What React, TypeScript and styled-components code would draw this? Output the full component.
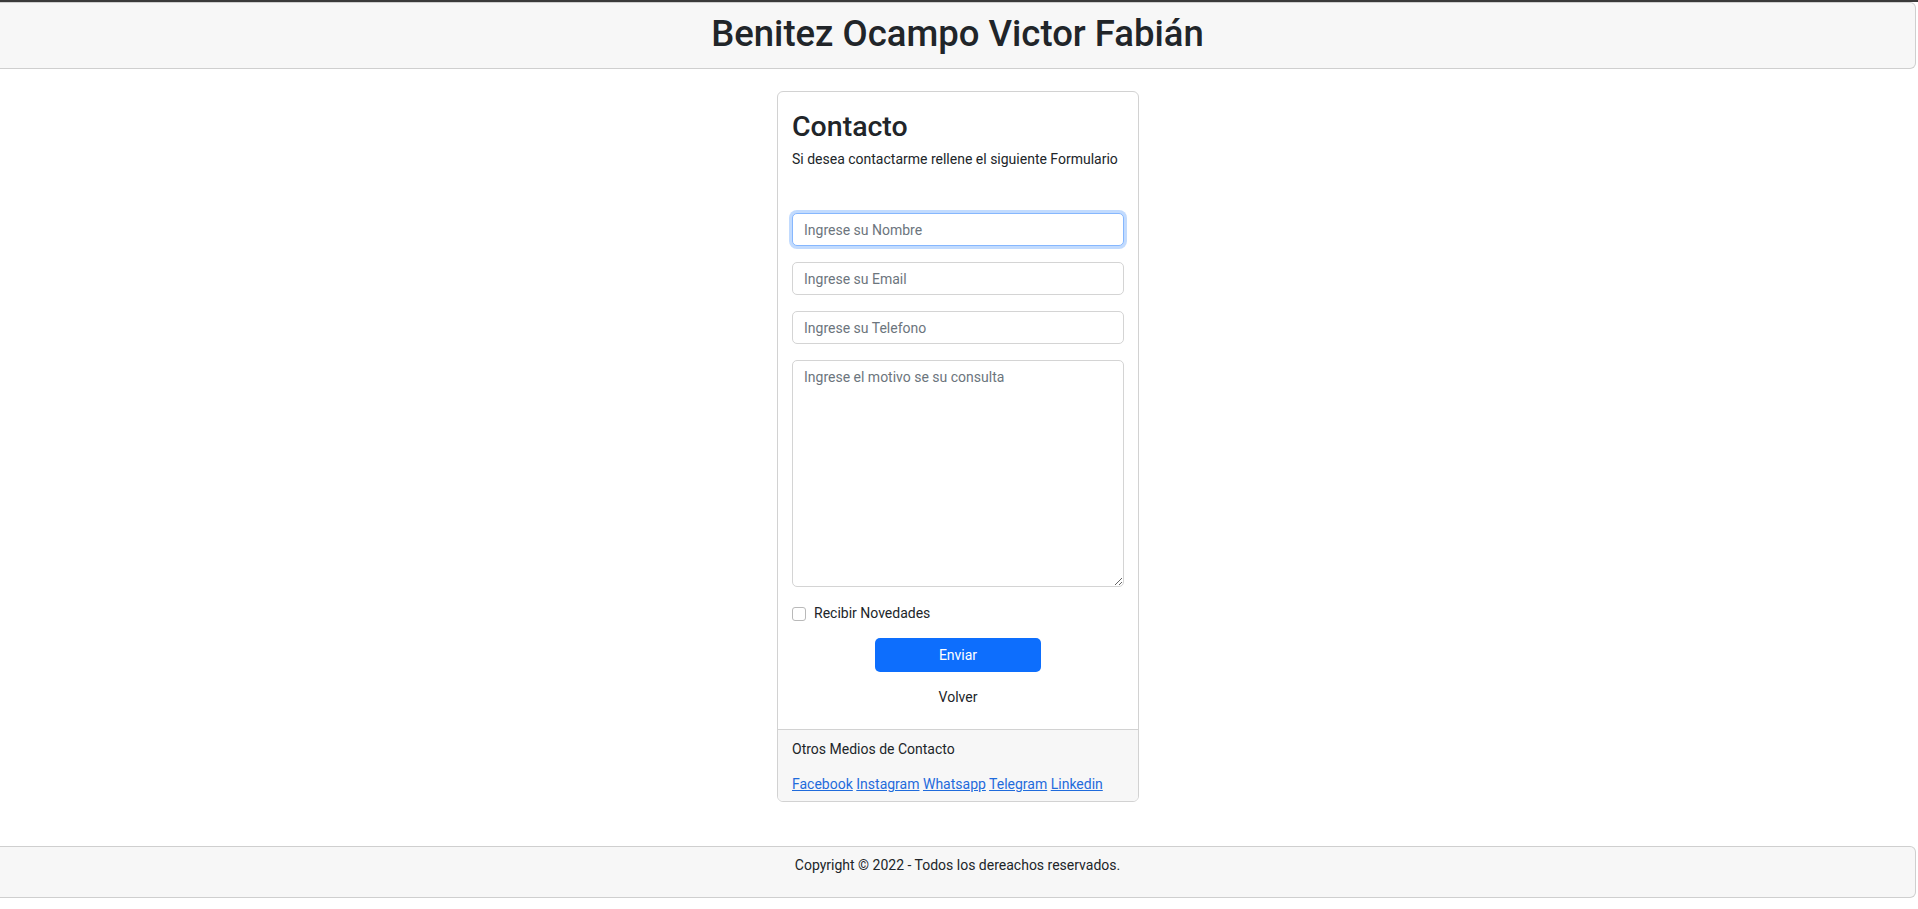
import React from "react";
import styled, { createGlobalStyle } from "styled-components";

const GlobalStyle = createGlobalStyle`
  html, body { margin: 0; padding: 0; background: #fff; }
  body {
    font-family: Roboto, "Noto Sans", "Liberation Sans", sans-serif;
    color: #212529;
    font-size: 14px;
    line-height: 1.5;
  }
  * { box-sizing: border-box; }
`;

const Page = styled.div`
  display: flex;
  flex-direction: column;
  min-height: 909px;
`;

const TopLine = styled.div`
  height: 2px;
  background: #3a3a3a;
`;

const Header = styled.header`
  height: 67px;
  margin-right: 2px;
  padding-bottom: 3px;
  background: #f7f7f7;
  border: 1px solid #cfcfcf;
  border-left: none;
  border-radius: 0 6px 6px 0;
  display: flex;
  align-items: center;
  justify-content: center;
`;

const HeaderTitle = styled.h1`
  margin: 0;
  font-size: 36.5px;
  font-weight: 500;
  line-height: 1.2;
  color: #212529;
`;

const Main = styled.main`
  display: flex;
  justify-content: center;
  padding: 22px 2px 0 0;
`;

const Card = styled.section`
  width: 362px;
  border: 1px solid #d2d2d2;
  border-radius: 6px;
  background: #fff;
  overflow: hidden;
`;

const CardBody = styled.div`
  padding: 18px 14px 21px 14px;
`;

const Title = styled.h2`
  margin: 0 0 5px 0;
  font-size: 28.5px;
  font-weight: 500;
  line-height: 1.2;
`;

const Subtitle = styled.p`
  margin: 0 0 43px 0;
`;

const Form = styled.form`
  display: flex;
  flex-direction: column;
  gap: 16px;
`;

const Input = styled.input<{ $focused?: boolean }>`
  height: 33px;
  width: 100%;
  padding: 0 11px;
  font: inherit;
  font-size: 14px;
  color: #212529;
  border: 1px solid ${(p) => (p.$focused ? "#86b7fe" : "#d4d4d4")};
  border-radius: 5px;
  outline: none;
  box-shadow: ${(p) => (p.$focused ? "0 0 0 3px rgba(13,110,253,.25)" : "none")};
  &::placeholder { color: #6c757d; }
`;

const TextArea = styled.textarea`
  height: 227px;
  width: 100%;
  padding: 6px 11px;
  font: inherit;
  font-size: 14px;
  line-height: 1.5;
  border: 1px solid #d4d4d4;
  border-radius: 5px;
  outline: none;
  resize: vertical;
  &::placeholder { color: #6c757d; }
`;

const CheckRow = styled.label`
  display: flex;
  align-items: center;
  gap: 8px;
  height: 21px;
`;

const CheckBox = styled.input`
  appearance: none;
  margin: 0;
  width: 14px;
  height: 14px;
  border: 1px solid #b9b9b9;
  border-radius: 3px;
  background: #fff;
`;

const ButtonRow = styled.div`
  display: flex;
  flex-direction: column;
  align-items: center;
  gap: 15px;
  margin-top: -2px;
`;

const SubmitButton = styled.button`
  width: 166px;
  height: 34px;
  background: #0d6efd;
  color: #fff;
  border: none;
  border-radius: 5px;
  font: inherit;
  font-size: 14px;
`;

const BackLink = styled.span`
  color: #212529;
  line-height: 21px;
`;

const CardFooter = styled.div`
  background: #f7f7f7;
  border-top: 1px solid #d2d2d2;
  padding: 9px 14px 6px 14px;
`;

const FooterText = styled.p`
  margin: 0 0 14px 0;
`;

const Links = styled.p`
  margin: 0;
`;

const Link = styled.a`
  color: #1f6bdc;
  text-decoration: underline;
`;

const Footer = styled.footer`
  margin-top: 44px;
  margin-right: 2px;
  background: #f7f7f7;
  border: 1px solid #cfcfcf;
  border-left: none;
  border-radius: 0 6px 6px 0;
  padding: 8px 0 21px 0;
  text-align: center;
`;

export default function App() {
  return (
    <>
      <GlobalStyle />
      <Page>
        <TopLine />
        <Header>
          <HeaderTitle>Benitez Ocampo Victor Fabián</HeaderTitle>
        </Header>
        <Main>
          <Card>
            <CardBody>
              <Title>Contacto</Title>
              <Subtitle>Si desea contactarme rellene el siguiente Formulario</Subtitle>
              <Form onSubmit={(e) => e.preventDefault()}>
                <Input $focused autoFocus placeholder="Ingrese su Nombre" />
                <Input placeholder="Ingrese su Email" />
                <Input placeholder="Ingrese su Telefono" />
                <TextArea placeholder="Ingrese el motivo se su consulta" />
                <CheckRow>
                  <CheckBox type="checkbox" />
                  Recibir Novedades
                </CheckRow>
                <ButtonRow>
                  <SubmitButton type="submit">Enviar</SubmitButton>
                  <BackLink>Volver</BackLink>
                </ButtonRow>
              </Form>
            </CardBody>
            <CardFooter>
              <FooterText>Otros Medios de Contacto</FooterText>
              <Links>
                <Link href="#">Facebook</Link> <Link href="#">Instagram</Link>{" "}
                <Link href="#">Whatsapp</Link> <Link href="#">Telegram</Link>{" "}
                <Link href="#">Linkedin</Link>
              </Links>
            </CardFooter>
          </Card>
        </Main>
        <Footer>Copyright © 2022 - Todos los dereachos reservados.</Footer>
      </Page>
    </>
  );
}
